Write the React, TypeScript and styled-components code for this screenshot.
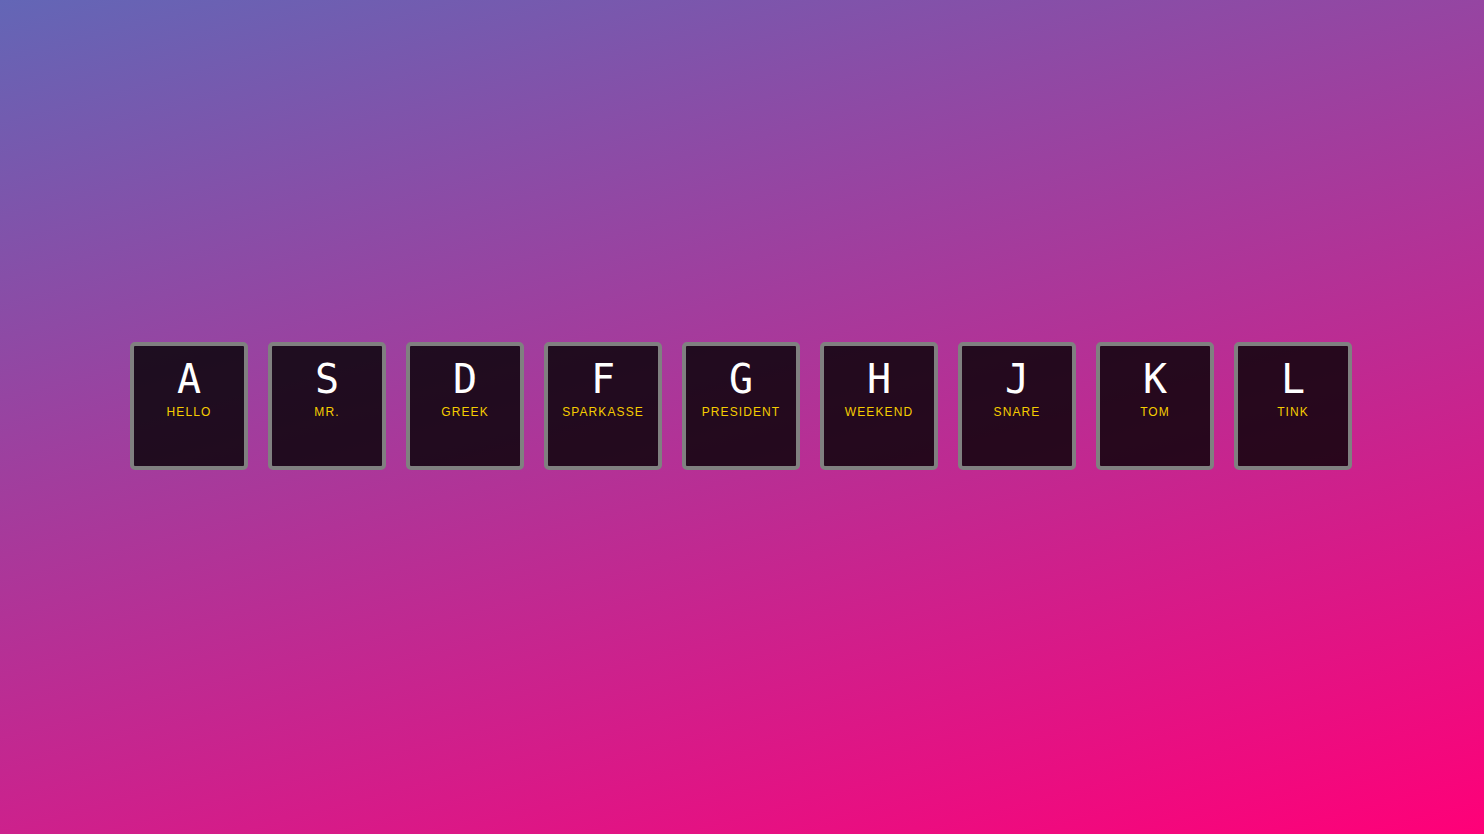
import React from "react";
import styled, { createGlobalStyle } from "styled-components";

const GlobalStyle = createGlobalStyle`
  html, body {
    margin: 0;
    padding: 0;
  }
  body {
    font-family: "Liberation Sans", Arial, sans-serif;
  }
`;

const Page = styled.div`
  width: 1484px;
  height: 834px;
  background: linear-gradient(165deg, #6366b6 0%, #ff0078 100%);
  display: flex;
  align-items: center;
  justify-content: center;
  padding-bottom: 22px;
  padding-right: 2px;
  box-sizing: border-box;
`;

const Keys = styled.div`
  display: flex;
  gap: 20px;
`;

const Key = styled.div`
  box-sizing: border-box;
  width: 118px;
  height: 128px;
  border: 4px solid #808080;
  border-radius: 5px;
  background: rgba(0, 0, 0, 0.8);
  padding-top: 10px;
  display: flex;
  flex-direction: column;
  align-items: center;
`;

const Letter = styled.kbd`
  display: block;
  font-family: "DejaVu Sans Mono", monospace;
  font-size: 40px;
  line-height: 46px;
  color: #ffffff;
`;

const Sound = styled.span`
  display: block;
  margin-top: 3px;
  font-family: "Liberation Sans", Arial, sans-serif;
  font-size: 12px;
  letter-spacing: 1.1px;
  text-transform: uppercase;
  color: #f5cc00;
`;

const keys: [string, string][] = [
  ["A", "hello"],
  ["S", "Mr."],
  ["D", "Greek"],
  ["F", "Sparkasse"],
  ["G", "President"],
  ["H", "Weekend"],
  ["J", "snare"],
  ["K", "tom"],
  ["L", "tink"],
];

export default function App() {
  return (
    <>
      <GlobalStyle />
      <Page>
        <Keys>
          {keys.map(([k, s]) => (
            <Key key={k}>
              <Letter>{k}</Letter>
              <Sound>{s}</Sound>
            </Key>
          ))}
        </Keys>
      </Page>
    </>
  );
}
